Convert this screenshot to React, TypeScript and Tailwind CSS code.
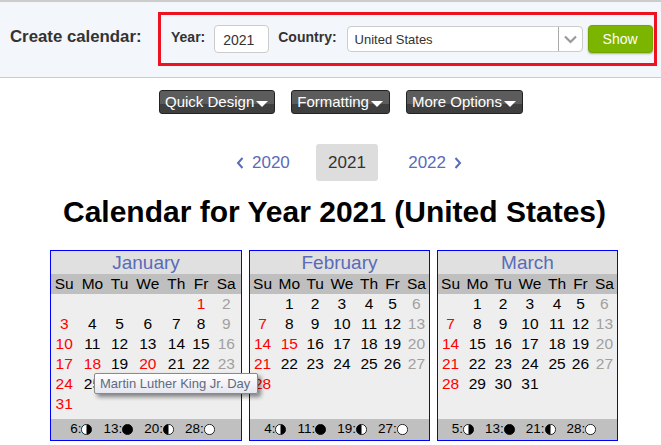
import React from "react";

const RED = "text-[#ff0000]";
const GRAY = "text-[#a0a0a0]";
const DARK = "text-black";

type Month = {
  name: string;
  start: number;
  days: number;
  holidays: number[];
  moons: [string, string, string, string];
  w: string;
  tableW: string;
};

const months: Month[] = [
  { name: "January", start: 5, days: 31, holidays: [1, 18, 20], moons: ["6", "13", "20", "28"], w: "w-[192px]", tableW: "w-[188.5px] bg-[#eeeeee]" },
  { name: "February", start: 1, days: 28, holidays: [15], moons: ["4", "11", "19", "27"], w: "w-[181px]", tableW: "w-full" },
  { name: "March", start: 1, days: 31, holidays: [], moons: ["5", "13", "21", "28"], w: "w-[181px]", tableW: "w-full" },
];

function Moon({ phase }: { phase: number }) {
  return (
    <svg width="11" height="11" viewBox="0 0 11 11" className="block">
      <circle cx="5.5" cy="5.5" r="5.1" fill={phase === 1 ? "#000" : "#fff"} stroke="#000" strokeWidth="0.8" />
      {phase === 0 && <path d="M5.5 .4a5.1 5.1 0 0 1 0 10.2z" fill="#000" />}
      {phase === 2 && <path d="M5.5 .4a5.1 5.1 0 0 0 0 10.2z" fill="#000" />}
    </svg>
  );
}

function MonthCard({ m }: { m: Month }) {
  const cells: (number | null)[] = [];
  for (let i = 0; i < m.start; i++) cells.push(null);
  for (let d = 1; d <= m.days; d++) cells.push(d);
  while (cells.length < 42) cells.push(null);
  const rows: (number | null)[][] = [];
  for (let i = 0; i < 42; i += 7) rows.push(cells.slice(i, i + 7));
  return (
    <div className={`${m.w} h-[191px] border border-[#0000ff] bg-[#eeeeee] flex flex-col`}>
      <div className="h-[23px] bg-[#e0e0e0] text-center text-[19px] leading-[23px] text-[#5a6bb8]">{m.name}</div>
      <div className="bg-[linear-gradient(#bfbfbf_20px,#eeeeee_20px)]">
        <table className={`${m.tableW} border-collapse text-[15.5px] leading-[20px] text-center`}>
          <thead>
            <tr className="bg-[#bfbfbf] h-[20px]">
              {["Su", "Mo", "Tu", "We", "Th", "Fr", "Sa"].map((d) => (
                <th key={d} className="font-normal p-0 text-black">{d}</th>
              ))}
            </tr>
          </thead>
          <tbody>
            {rows.map((r, i) => (
              <tr key={i} className="h-[20px]">
                {r.map((d, j) => {
                  const color = d === null ? DARK : j === 0 || m.holidays.includes(d) ? RED : j === 6 ? GRAY : DARK;
                  return (
                    <td key={j} className={`p-0 ${color}`}>{d ?? ""}</td>
                  );
                })}
              </tr>
            ))}
          </tbody>
        </table>
      </div>
      <div className="mt-auto h-[21px] bg-[#c0c0c0] flex items-center justify-center gap-[11px] pr-[7px] text-[13.5px] text-black">
        {m.moons.map((t, i) => (
          <span key={i} className="flex items-center">
            {t}:<Moon phase={i} />
          </span>
        ))}
      </div>
    </div>
  );
}

function Drop({ label }: { label: string }) {
  return (
    <button className="h-[24px] pl-[5px] pr-[6px] rounded-[3px] border border-[#222222] bg-[linear-gradient(#5c5c5c_0%,#5c5c5c_60%,#3f3f3f_61%,#3f3f3f_100%)] text-white text-[15px] leading-[22px] flex items-center gap-[2px]">
      {label}
      <svg width="12" height="6" viewBox="0 0 12 6" className="mt-[3px]"><path d="M0 0h12L6 6z" fill="#fff" /></svg>
    </button>
  );
}

export default function App() {
  return (
    <div className="relative w-[661px] h-[445px] overflow-hidden bg-white font-['Liberation_Sans',Arial,sans-serif]">
      <header className="h-[78px] bg-[#f3f6fa] border-t-2 border-b border-[#cccccc] flex items-start pl-[10px]">
        <div className="w-[148px] mt-[25px] text-[16.8px] leading-[20px] font-bold text-[#333333] whitespace-nowrap">Create calendar:</div>
        <div className="w-[499px] h-[54px] mt-[10px] border-[3px] border-[#ee1122] flex items-center pl-[10px]">
          <span className="text-[14px] font-bold text-[#333333] -mt-[4px]">Year:</span>
          <div className="ml-[9px] w-[55px] h-[28px] bg-white border border-[#cccccc] rounded-[4px] text-[14px] leading-[28px] pl-[8px] text-[#333333]">2021</div>
          <span className="ml-[9px] text-[14px] font-bold text-[#333333] -mt-[4px]">Country:</span>
          <div className="ml-[10px] w-[236px] h-[26px] bg-white border border-[#cccccc] rounded-[4px] flex items-center text-[13px] text-[#333333]">
            <span className="pl-[7px] pt-[1px] flex-1">United States</span>
            <span className="w-[24px] h-full border-l border-[#aaaaaa] flex items-center justify-center">
              <svg width="13" height="9" viewBox="0 0 13 9"><path d="M1 1.5l5.5 5.5L12 1.5" fill="none" stroke="#999999" strokeWidth="2.2" /></svg>
            </span>
          </div>
          <button className="ml-[5px] w-[65px] h-[28px] pt-[1px] rounded-[4px] bg-[#7cb500] border border-[#72a600] text-white text-[14px] shadow-[0_1px_2px_rgba(0,0,0,0.3)]">Show</button>
        </div>
      </header>

      <nav className="flex justify-center gap-[16px] mt-[12px] pl-[21px]">
        <Drop label="Quick Design" />
        <Drop label="Formatting" />
        <Drop label="More Options" />
      </nav>

      <div className="flex items-center justify-center mt-[30px] text-[17px] h-[37px] pl-[37px]">
        <span className="flex items-center gap-[8px] text-[#5a6bb8] w-[80px]">
          <svg width="8" height="12" viewBox="0 0 8 12"><path d="M6.5 1L2 6l4.5 5" fill="none" stroke="#5a6bb8" strokeWidth="2" /></svg>
          2020
        </span>
        <span className="w-[62px] h-[37px] bg-[#dddddd] rounded-[3px] flex items-center justify-center text-[#333333]">2021</span>
        <span className="flex items-center justify-end gap-[8px] text-[#5a6bb8] w-[84px]">
          2022
          <svg width="8" height="12" viewBox="0 0 8 12"><path d="M1.5 1L6 6l-4.5 5" fill="none" stroke="#5a6bb8" strokeWidth="2" /></svg>
        </span>
      </div>

      <h1 className="mt-[13px] pl-[8px] text-center text-[30px] leading-[36px] font-bold text-black">Calendar for Year 2021 (United States)</h1>

      <div className="flex gap-[7px] pl-[50px] mt-[20px]">
        {months.map((m) => (
          <MonthCard key={m.name} m={m} />
        ))}
      </div>

      <div className="absolute left-[94px] top-[373px] w-[164px] h-[21px] border border-[#8a8a8a] rounded-[2px] bg-[linear-gradient(#ffffff,#e6e6f0)] shadow-[3px_3px_4px_rgba(0,0,0,0.45)] text-[13px] leading-[20px] text-[#5f6b80] pl-[5px] whitespace-nowrap">
        Martin Luther King Jr. Day
      </div>
    </div>
  );
}
